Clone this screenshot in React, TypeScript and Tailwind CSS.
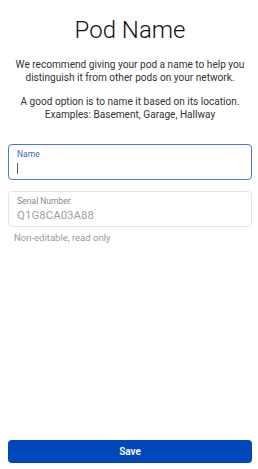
import React from "react";

const App: React.FC = () => {
  return (
    <div
      className="flex h-[469px] w-[258px] flex-col bg-white pl-[8px] pr-[6px] text-[#222]"
      style={{ fontFamily: "Roboto, 'Liberation Sans', sans-serif" }}
    >
      <h1 className="pt-[16px] text-center text-[24px] font-light leading-[28px] text-[#111]">
        Pod Name
      </h1>
      <p className="mt-[15px] text-center text-[10.1px] leading-[12.5px] text-[#333]">
        We recommend giving your pod a name to help you distinguish it from
        other pods on your network.
      </p>
      <p className="mt-[12px] px-[4px] text-center text-[10.1px] leading-[12.5px] text-[#333]">
        A good option is to name it based on its location. Examples: Basement,
        Garage, Hallway
      </p>

      <div className="mt-[23px] flex h-[36px] flex-col rounded-[4px] border-[1.5px] border-[#4a74d6] px-[8px] pt-[4px]">
        <span className="text-[8.5px] leading-[11px] text-[#3f5fc4]">Name</span>
        <span className="mt-[3px] h-[11px] w-px bg-[#555]" />
      </div>

      <div className="mt-[11px] flex h-[36px] flex-col rounded-[4px] border border-[#e4e4e4] px-[8px] pt-[4px]">
        <span className="text-[8.5px] leading-[11px] text-[#888]">
          Serial Number
        </span>
        <span className="mt-[1px] text-[11.5px] leading-[14px] text-[#a0a0a0]">
          Q1G8CA03A88
        </span>
      </div>
      <p className="mt-[5px] pl-[6px] text-[9.5px] leading-[12px] text-[#999]">
        Non-editable, read only
      </p>

      <div className="flex-1" />

      <button className="mb-[6px] h-[23px] w-full rounded-[4px] bg-[#0047bb] text-[10px] font-semibold text-white">
        Save
      </button>
    </div>
  );
};

export default App;
